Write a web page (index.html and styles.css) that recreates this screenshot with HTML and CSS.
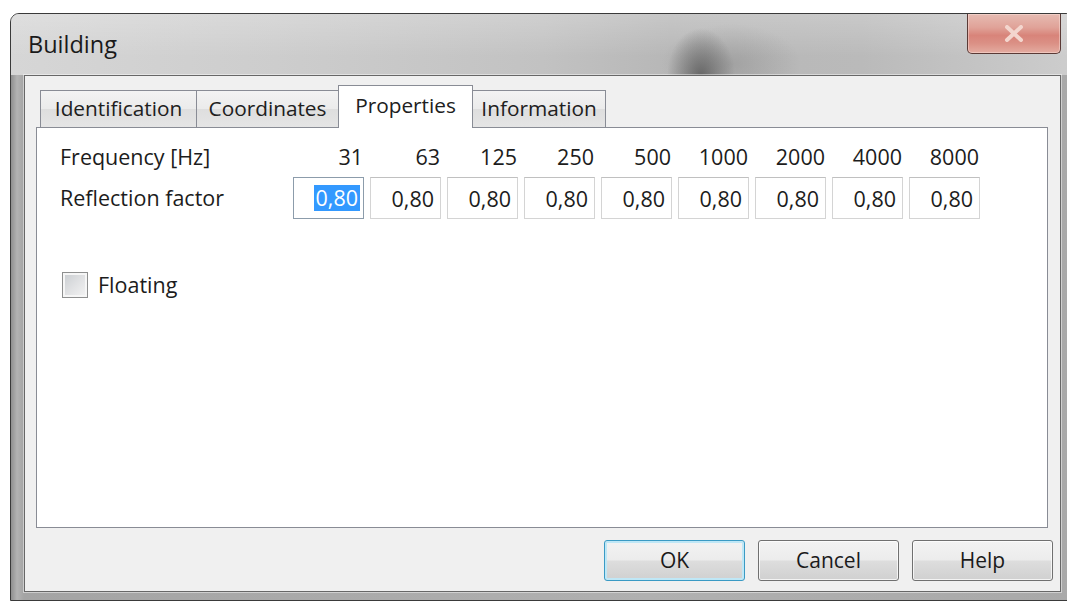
FILE: index.html
```html
<!DOCTYPE html>
<html lang="en">
<head>
<meta charset="utf-8">
<title>Building</title>
<link rel="stylesheet" href="styles.css">
</head>
<body>
<div class="screen">
  <div class="window">
    <div class="titlebar">
      <span class="title">Building</span>
      <div class="close" aria-label="Close">
        <svg width="20" height="17" viewBox="0 0 20 17">
          <path d="M3 2 L17 15 M17 2 L3 15" stroke="#f3d6ce" stroke-width="4" stroke-linecap="round" fill="none"/>
        </svg>
      </div>
    </div>
    <div class="frame">
      <div class="client">
        <div class="tabs">
          <div class="tab tab-ident">Identification</div>
          <div class="tab tab-coord">Coordinates</div>
          <div class="tab tab-props active">Properties</div>
          <div class="tab tab-info">Information</div>
        </div>
        <div class="panel">
          <div class="bands">
            <div class="label">Frequency [Hz]</div>
            <div class="freq">31</div>
            <div class="freq">63</div>
            <div class="freq">125</div>
            <div class="freq">250</div>
            <div class="freq">500</div>
            <div class="freq">1000</div>
            <div class="freq">2000</div>
            <div class="freq">4000</div>
            <div class="freq">8000</div>

            <div class="label">Reflection factor</div>
            <div class="field focus"><span class="sel">0,80</span></div>
            <div class="field">0,80</div>
            <div class="field">0,80</div>
            <div class="field">0,80</div>
            <div class="field">0,80</div>
            <div class="field">0,80</div>
            <div class="field">0,80</div>
            <div class="field">0,80</div>
            <div class="field">0,80</div>
          </div>
          <div class="checkrow">
            <span class="check"></span>
            <span>Floating</span>
          </div>
        </div>
        <div class="buttons">
          <div class="btn default">OK</div>
          <div class="btn">Cancel</div>
          <div class="btn">Help</div>
        </div>
      </div>
    </div>
  </div>
</div>
</body>
</html>
```
FILE: styles.css
```css
* {
  box-sizing: border-box;
}

html, body {
  margin: 0;
  width: 1067px;
  height: 603px;
  overflow: hidden;
  background: #ffffff;
  font-family: "Open Sans", "Liberation Sans", sans-serif;
  color: #1c1c1c;
}

.screen {
  height: 603px;
  padding: 13px 0 0 10px;
}

/* Aero-style window with a glass frame */
.window {
  width: 1065px;
  height: 588px;
  border: 1px solid #3a3a3a;
  border-radius: 9px 9px 0 0;
  background: linear-gradient(90deg, #8f8f8f 0, #b3b3b3 6px, #a4a4a4 13px, #b0b0b0 60%, #a9a9a9 100%);
  display: flex;
  flex-direction: column;
  overflow: hidden;
}

.titlebar {
  height: 61px;
  flex: none;
  display: flex;
  align-items: flex-start;
  background:
    radial-gradient(ellipse 34px 48px at 690px 62px, rgba(95, 95, 95, 0.9), rgba(95, 95, 95, 0) 100%),
    radial-gradient(ellipse 70px 40px at 720px 50px, rgba(120, 120, 120, 0.35), rgba(120, 120, 120, 0) 100%),
    linear-gradient(180deg, rgba(255, 255, 255, 0.22), rgba(255, 255, 255, 0) 70%),
    linear-gradient(90deg, #d6d6d6 0%, #cdcdcd 25%, #c2c2c2 50%, #b7b7b7 62%, #bababa 80%, #c5c5c5 92%, #cdcdcd 100%);
}

.title {
  padding: 14px 0 0 17px;
  font-size: 23.5px;
  line-height: 32px;
  color: #1a1a1a;
}

.close {
  margin-left: auto;
  margin-right: 13px;
  width: 94px;
  height: 40px;
  border: 1px solid #5a3a36;
  border-top: none;
  border-radius: 0 0 5px 5px;
  background: linear-gradient(180deg, #e6bbb2 0%, #e0a298 35%, #d8847a 55%, #db9085 75%, #e4aca1 100%);
  box-shadow: inset 0 0 0 1px rgba(255, 230, 225, 0.45);
  display: flex;
  align-items: center;
  justify-content: center;
}

.frame {
  flex: 1;
  padding: 0 13px 8px 13px;
  display: flex;
}

.client {
  flex: 1;
  border: 1px solid #676767;
  box-shadow: 0 0 0 1px rgba(255, 255, 255, 0.45);
  background: #f0f0f0;
  padding: 9px 7px 10px 11px;
  display: flex;
  flex-direction: column;
}

/* Tab strip */
.tabs {
  height: 42px;
  flex: none;
  display: flex;
  align-items: flex-end;
  padding-left: 4px;
}

.tab {
  height: 37px;
  margin-left: -1px;
  border: 1px solid #898c95;
  border-bottom: none;
  background: linear-gradient(180deg, #f3f3f3 0%, #ebebeb 50%, #dedede 51%, #e5e5e5 100%);
  font-size: 20.8px;
  line-height: 35px;
  text-align: center;
  white-space: nowrap;
  color: #202020;
}

.tab:first-child {
  margin-left: 0;
}

.tab-ident { width: 157px; }
.tab-coord { width: 143px; }
.tab-props { width: 135px; }
.tab-info  { width: 134px; }

.tab.active {
  position: relative;
  z-index: 1;
  height: 43px;
  margin-bottom: -1px;
  background: #ffffff;
  line-height: 38px;
}

.panel {
  flex: 1;
  margin-right: 5px;
  border: 1px solid #898c95;
  background: #ffffff;
  padding: 15px 0 0 23px;
}

.bands {
  display: grid;
  grid-template-columns: 227px repeat(9, 71px);
  grid-template-rows: 28px 42px;
  column-gap: 6px;
  row-gap: 6px;
  font-size: 21.5px;
}

.label {
  align-self: center;
  line-height: 28px;
  white-space: nowrap;
}

.freq {
  text-align: right;
  line-height: 28px;
  padding-right: 1px;
}

.field {
  border: 1px solid #d4d4d4;
  border-top-color: #c0c0c0;
  background: #ffffff;
  display: flex;
  align-items: center;
  justify-content: flex-end;
  padding-right: 6px;
}

.field.focus {
  border-color: #8c9cab;
  padding-right: 3px;
}

.sel {
  background: #3399ff;
  color: #ffffff;
  line-height: 26px;
  padding: 0 2px;
}

.checkrow {
  margin: 51px 0 0 2px;
  display: flex;
  align-items: center;
  gap: 10px;
  font-size: 21.5px;
}

.check {
  width: 26px;
  height: 26px;
  border: 1px solid #8e8f8f;
  background: linear-gradient(135deg, #c8ccd0 0%, #e0e1e3 50%, #f4f4f4 100%);
  box-shadow: inset 0 0 0 2px #f6f6f6;
}

/* Dialog buttons */
.buttons {
  flex: none;
  margin-top: 12px;
  display: flex;
  justify-content: flex-end;
  gap: 13px;
}

.btn {
  width: 141px;
  height: 41px;
  border: 1px solid #707070;
  border-radius: 3px;
  background: linear-gradient(180deg, #f3f3f3 0%, #ececec 48%, #dddddd 52%, #d0d0d0 100%);
  box-shadow: inset 0 0 0 1px rgba(255, 255, 255, 0.75);
  text-align: center;
  font-size: 21px;
  line-height: 38px;
  color: #1a1a1a;
}

.btn.default {
  border-color: #3a9ac4;
  box-shadow: inset 0 0 0 2px #bfe7f6;
}
```
